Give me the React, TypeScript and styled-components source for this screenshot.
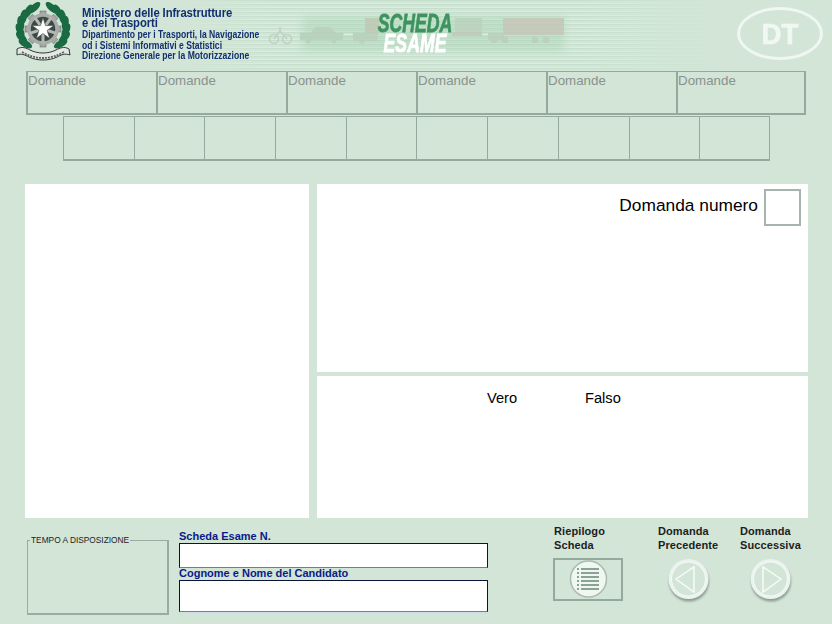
import React from 'react';
import styled, { createGlobalStyle } from 'styled-components';

const GlobalStyle = createGlobalStyle`
  html, body {
    margin: 0;
    padding: 0;
    background: #d2e5d7;
    font-family: "Liberation Sans", Arial, sans-serif;
  }
`;

const Page = styled.div`
  width: 832px;
  height: 624px;
  overflow: hidden;
  background: #d2e5d7;
  display: flex;
  flex-direction: column;
`;

const Header = styled.header`
  position: relative;
  height: 71px;
  flex: none;
  display: flex;
  align-items: flex-start;
  background:
    linear-gradient(90deg, #d2e5d7 0, #d2e5d7 190px, rgba(210, 229, 215, 0) 270px, rgba(210, 229, 215, 0) 580px, #d2e5d7 710px),
    repeating-linear-gradient(0deg, #d2e5d7 0 2px, #c4e0cc 2px 3px, #dbede0 3px 4px);
`;

const Emblem = styled.svg`
  flex: none;
  width: 58px;
  height: 66px;
  margin: 2px 0 0 14px;
`;

const Ministry = styled.div`
  margin: 8px 0 0 10px;
  width: 180px;
  color: #12306f;
  font-weight: bold;
  white-space: nowrap;
`;

const MinistryTitle = styled.div`
  font-size: 12px;
  line-height: 10px;
  letter-spacing: -0.1px;
  transform: scaleX(0.94);
  transform-origin: left;
`;

const MinistryLine = styled.div`
  font-size: 10px;
  line-height: 10.5px;
  transform: scaleX(0.86);
  transform-origin: left;
  &:nth-child(3) {
    margin-top: 2px;
  }
`;

const Vehicles = styled.svg`
  position: absolute;
  left: 266px;
  top: 10px;
  width: 304px;
  height: 46px;
  opacity: 0.8;
`;

const ExamTitle = styled.div`
  position: absolute;
  left: 355px;
  top: 13px;
  width: 120px;
  text-align: center;
  font-weight: bold;
  font-style: italic;
  font-size: 26px;
  line-height: 20px;
`;

const ExamWord = styled.div<{ $white?: boolean }>`
  color: ${p => (p.$white ? '#ffffff' : '#3f9360')};
  -webkit-text-stroke: 0.8px ${p => (p.$white ? '#ffffff' : '#3f9360')};
  transform: scaleX(0.68);
  white-space: nowrap;
`;

const Oval = styled.div`
  position: absolute;
  left: 737px;
  top: 7px;
  width: 80px;
  height: 47px;
  border: 3px solid #eef7f1;
  border-radius: 50%;
  display: flex;
  align-items: center;
  justify-content: center;
  color: #f1f8f3;
  font-weight: bold;
  font-size: 30px;
`;

const OvalText = styled.span`
  -webkit-text-stroke: 0.6px #f1f8f3;
  transform: scaleX(0.92);
`;

const QuestionRow = styled.div`
  flex: none;
  display: flex;
  height: 44px;
  margin-left: 26px;
`;

const QuestionCell = styled.div`
  flex: none;
  width: 130px;
  height: 44px;
  box-sizing: border-box;
  border: solid #95a99c;
  border-width: 1px 0 2px 2px;
  padding: 1px 0 0 0;
  font-size: 13.33px;
  line-height: 15px;
  color: #8a928d;
  &:last-child {
    border-right-width: 2px;
  }
`;

const NumberRow = styled.div`
  flex: none;
  display: flex;
  height: 45px;
  margin: 1px 0 0 63px;
`;

const NumberCell = styled.div`
  flex: none;
  width: 70.7px;
  height: 45px;
  box-sizing: border-box;
  border: solid #95a99c;
  border-width: 1px 0 2px 1px;
  &:last-child {
    border-right-width: 1px;
  }
`;

const Main = styled.main`
  flex: none;
  display: grid;
  grid-template-columns: 284px 491px;
  column-gap: 8px;
  height: 334px;
  margin: 23px 0 0 25px;
`;

const Panel = styled.section`
  background: #ffffff;
`;

const RightColumn = styled.div`
  display: grid;
  grid-template-rows: 188px 142px;
  row-gap: 4px;
`;

const QuestionPanel = styled(Panel)`
  display: flex;
  justify-content: flex-end;
  align-items: flex-start;
  padding: 5px 7px 0 0;
`;

const QuestionLabel = styled.span`
  font-size: 17.33px;
  line-height: 32px;
  color: #000000;
  margin-right: 6px;
`;

const QuestionNumber = styled.div`
  width: 37px;
  height: 37px;
  box-sizing: border-box;
  border: 2px solid #a5b5ab;
`;

const AnswerPanel = styled(Panel)`
  display: flex;
  align-items: flex-start;
  padding: 14px 0 0 170px;
  font-size: 14.67px;
  line-height: 16px;
  color: #000000;
`;

const AnswerOption = styled.span`
  width: 98px;
`;

const Footer = styled.footer`
  flex: 1;
  display: flex;
  align-items: flex-start;
  padding-left: 27px;
`;

const TimeBox = styled.fieldset`
  flex: none;
  box-sizing: border-box;
  width: 142px;
  height: 80px;
  margin: 17px 0 0 0;
  padding: 0;
  border: solid #9aab9f;
  border-width: 1px 2px 2px 1px;
`;

const TimeLegend = styled.legend`
  margin-left: 2px;
  padding: 0 1px;
  font-size: 8.33px;
  line-height: 11px;
  color: #222222;
`;

const CandidateForm = styled.div`
  flex: none;
  width: 309px;
  margin: 11px 0 0 10px;
`;

const FieldLabel = styled.label`
  display: block;
  font-size: 11px;
  font-weight: bold;
  line-height: 14px;
  color: #0a1a8a;
`;

const FieldBox = styled.div<{ $tall?: boolean }>`
  box-sizing: border-box;
  height: ${p => (p.$tall ? '32px' : '25px')};
  margin-bottom: ${p => (p.$tall ? '0' : '-2px')};
  background: #ffffff;
  border: 1px solid #0a1436;
  border-bottom-color: #6f7f92;
  box-shadow: 0 2px 0 ${p => (p.$tall ? '#cfdfe6' : 'transparent')};
`;

const Actions = styled.div`
  flex: none;
  display: flex;
  margin: 6px 0 0 65px;
`;

const ActionColumn = styled.div<{ $width: number }>`
  flex: none;
  width: ${p => p.$width}px;
  display: flex;
  flex-direction: column;
`;

const ActionLabel = styled.div`
  font-size: 11px;
  font-weight: bold;
  line-height: 14px;
  letter-spacing: 0.1px;
  color: #1d1d1d;
  height: 34px;
  margin-left: 1px;
`;

const SummaryBox = styled.div`
  width: 70px;
  height: 43px;
  box-sizing: border-box;
  border: 2px solid #93a99b;
  display: flex;
  align-items: flex-start;
  justify-content: center;
`;

const NavButton = styled.div`
  width: 45px;
  height: 45px;
  margin-left: 9px;
`;

const NavIcon = styled.svg`
  display: block;
  width: 45px;
  height: 45px;
`;

const SummaryIcon = styled.svg`
  display: block;
  width: 39px;
  height: 39px;
`;

const questionCells = [0, 1, 2, 3, 4, 5];
const numberCells = [0, 1, 2, 3, 4, 5, 6, 7, 8, 9];
const ministryLines = [
  'Dipartimento per i Trasporti, la Navigazione',
  'od i Sistemi Informativi e Statistici',
  'Direzione Generale per la Motorizzazione',
];

const gearTeeth = [0, 45, 90, 135, 180, 225, 270, 315];
const leafAngles = [-68, -50, -32, -14, 4, 22, 40];
const spokeAngles = [36, 108, 180, 252, 324];

const RepublicEmblem = () => (
  <Emblem viewBox="0 0 58 66">
    {leafAngles.map(a => (
      <g key={a}>
        <ellipse cx="52" cy="27" rx="3.4" ry="7.5" fill="#1a6a44" transform={`rotate(${a} 29 27) rotate(22 52 27)`} />
        <ellipse cx="6" cy="27" rx="3.4" ry="7.5" fill="#1a6a44" transform={`rotate(${-a} 29 27) rotate(-22 6 27)`} />
      </g>
    ))}
    {gearTeeth.map(a => (
      <rect key={a} x="26" y="9" width="6" height="6" fill="#a3a7a4" stroke="#5b625e" strokeWidth="0.5" transform={`rotate(${a} 29 27)`} />
    ))}
    <circle cx="29" cy="27" r="14" fill="#3e4843" stroke="#a9adaa" strokeWidth="3.5" />
    {spokeAngles.map(a => (
      <rect key={a} x="27.5" y="13" width="3" height="14" fill="#b5b9b6" transform={`rotate(${a} 29 27)`} />
    ))}
    <polygon
      points="29,15.5 31.5,23.6 40,23.6 33.1,28.4 35.7,36.5 29,31.5 22.3,36.5 24.9,28.4 18,23.6 26.5,23.6"
      fill="#ffffff"
      stroke="#39423d"
      strokeWidth="0.6"
    />
    <path
      d="M3 47c5-3 9-1 13 1 8 4 18 4 26 0 4-2 8-4 13-1l1 6c-5-2-9 0-13 2-8 4-20 4-28 0-4-2-8-4-12-2z"
      fill="#e4e8e4"
      stroke="#2f3833"
      strokeWidth="1"
    />
    <path d="M8 50c7 4 14 6 21 6s14-2 21-6" fill="none" stroke="#59625c" strokeWidth="1.8" strokeDasharray="2 1" />
  </Emblem>
);

// coordinates below are page x - 266, page y - 10
const RoadVehicles = () => (
  <Vehicles viewBox="0 0 304 46">
    <defs>
      <filter id="soft" x="-10%" y="-30%" width="120%" height="160%">
        <feGaussianBlur stdDeviation="0.7" />
      </filter>
      <filter id="band" x="-10%" y="-40%" width="120%" height="180%">
        <feGaussianBlur stdDeviation="4" />
      </filter>
    </defs>
    <rect x="36" y="7" width="262" height="34" fill="#a6d2b2" opacity="0.55" filter="url(#band)" />
    <g filter="url(#soft)">
      <g fill="none" stroke="#bfcabb" strokeWidth="1.6">
        <circle cx="8" cy="29" r="4.5" />
        <circle cx="21" cy="29" r="4.5" />
        <path d="M8 29l6-8 7 8M14 21v-4" />
      </g>
      <g fill="#b4ceb9">
        <path d="M34 23h10l6-6h14l6 6h7v7H34z" />
        <circle cx="42" cy="31" r="2.5" />
        <circle cx="68" cy="31" r="2.5" />
        <rect x="87" y="23" width="25" height="8" />
        <circle cx="96" cy="31" r="3" />
      </g>
      <rect x="99" y="8" width="14" height="15" fill="#bcc6b0" />
      <rect x="189" y="8" width="27" height="15" fill="#b7d0ba" />
      <rect x="186" y="22" width="30" height="4" fill="#bcc6b4" />
      <rect x="222" y="23" width="16" height="7" fill="#b9cdb8" />
      <rect x="237" y="8" width="61" height="17" fill="#c2c4b4" />
      <g fill="#b8cab8">
        <circle cx="228" cy="30" r="3.2" />
        <circle cx="239" cy="30" r="3.2" />
        <circle cx="269" cy="30" r="3.2" />
        <circle cx="280" cy="30" r="3.2" />
      </g>
      <rect x="78" y="23.5" width="9" height="1.5" fill="#dfeee3" />
      <rect x="216" y="23.5" width="6" height="1.5" fill="#dfeee3" />
    </g>
  </Vehicles>
);

const SummaryGlyph = () => (
  <SummaryIcon viewBox="0 0 39 39">
    <circle cx="19.5" cy="19" r="18" fill="#f0f6f2" stroke="#a8bbae" strokeWidth="1.5" />
    {[9, 13, 17, 21, 25, 29].map(y => (
      <g key={y} fill="#8aa393">
        <rect x="8" y={y - 1} width="2" height="2" />
        <rect x="12" y={y - 1} width="18" height="2" />
      </g>
    ))}
  </SummaryIcon>
);

const NavGlyph = ({ points }: { points: string }) => (
  <NavIcon viewBox="0 0 45 45">
    <defs>
      <filter id="navShadow" x="-20%" y="-20%" width="140%" height="140%">
        <feGaussianBlur stdDeviation="1.2" />
      </filter>
    </defs>
    <circle cx="23" cy="23.5" r="20" fill="#75857b" opacity="0.75" filter="url(#navShadow)" />
    <circle cx="22.5" cy="21" r="20" fill="#eaf3ed" />
    <circle cx="22.5" cy="21" r="17" fill="#d2e5d7" stroke="#f8fbf9" strokeWidth="1" />
    <polygon points={points} fill="none" stroke="#f8fbf9" strokeWidth="1.5" />
  </NavIcon>
);

const App: React.FC = () => (
  <Page>
    <GlobalStyle />
    <Header>
      <RepublicEmblem />
      <Ministry>
        <MinistryTitle>Ministero delle Infrastrutture</MinistryTitle>
        <MinistryTitle>e dei Trasporti</MinistryTitle>
        {ministryLines.map(line => (
          <MinistryLine key={line}>{line}</MinistryLine>
        ))}
      </Ministry>
      <RoadVehicles />
      <ExamTitle>
        <ExamWord>SCHEDA</ExamWord>
        <ExamWord $white>ESAME</ExamWord>
      </ExamTitle>
      <Oval>
        <OvalText>DT</OvalText>
      </Oval>
    </Header>

    <QuestionRow>
      {questionCells.map(i => (
        <QuestionCell key={i}>Domande</QuestionCell>
      ))}
    </QuestionRow>

    <NumberRow>
      {numberCells.map(i => (
        <NumberCell key={i} />
      ))}
    </NumberRow>

    <Main>
      <Panel />
      <RightColumn>
        <QuestionPanel>
          <QuestionLabel>Domanda numero</QuestionLabel>
          <QuestionNumber />
        </QuestionPanel>
        <AnswerPanel>
          <AnswerOption>Vero</AnswerOption>
          <AnswerOption>Falso</AnswerOption>
        </AnswerPanel>
      </RightColumn>
    </Main>

    <Footer>
      <TimeBox>
        <TimeLegend>TEMPO A DISPOSIZIONE</TimeLegend>
      </TimeBox>
      <CandidateForm>
        <FieldLabel>Scheda Esame N.</FieldLabel>
        <FieldBox />
        <FieldLabel>Cognome e Nome del Candidato</FieldLabel>
        <FieldBox $tall />
      </CandidateForm>
      <Actions>
        <ActionColumn $width={104}>
          <ActionLabel>Riepilogo<br />Scheda</ActionLabel>
          <SummaryBox>
            <SummaryGlyph />
          </SummaryBox>
        </ActionColumn>
        <ActionColumn $width={82}>
          <ActionLabel>Domanda<br />Precedente</ActionLabel>
          <NavButton>
            <NavGlyph points="10,21 28,9 28,34" />
          </NavButton>
        </ActionColumn>
        <ActionColumn $width={70}>
          <ActionLabel>Domanda<br />Successiva</ActionLabel>
          <NavButton>
            <NavGlyph points="33,21 15,9 15,34" />
          </NavButton>
        </ActionColumn>
      </Actions>
    </Footer>
  </Page>
);

export default App;
